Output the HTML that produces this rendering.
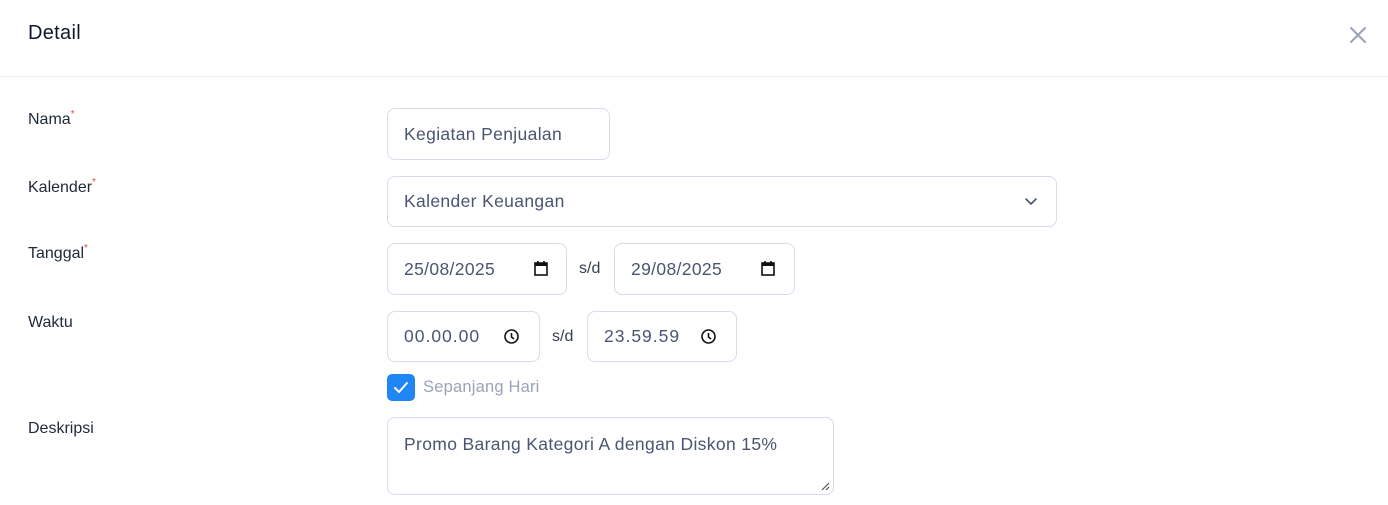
<!DOCTYPE html>
<html><head><meta charset="utf-8"><style>
*{box-sizing:border-box;margin:0;padding:0}
body{width:1388px;height:505px;background:#fff;font-family:"Liberation Sans",sans-serif;position:relative;overflow:hidden}
.abs{position:absolute}
.title{left:28px;top:22px;font-size:20px;color:#101828;letter-spacing:0.3px}
.hr{left:0;top:76px;width:1388px;height:1px;background:#e9ecf2}
.lbl{left:28px;font-size:16px;color:#1f2937}
.lbl sup{color:#ef4444;font-size:10px;position:relative;top:-2px;vertical-align:top}
.box{border:1px solid #d8dcea;border-radius:8px;background:#fff;font-size:17.5px;letter-spacing:0.35px;color:#4a5572;padding-left:16px;display:flex;align-items:center}
.sd{font-size:16px;color:#374151}
</style></head><body>
<div class="abs title">Detail</div>
<svg class="abs" style="left:1349px;top:26px" width="18" height="18" viewBox="0 0 18 18"><path d="M2 2L16 16M16 2L2 16" stroke="#9aa3b5" stroke-width="2" stroke-linecap="round"/></svg>
<div class="abs hr"></div>

<div class="abs lbl" style="top:111px">Nama<sup>*</sup></div>
<div class="abs lbl" style="top:179px">Kalender<sup>*</sup></div>
<div class="abs lbl" style="top:245px">Tanggal<sup>*</sup></div>
<div class="abs lbl" style="top:314px">Waktu</div>
<div class="abs lbl" style="top:420px">Deskripsi</div>

<div class="abs box" style="left:387px;top:108px;width:223px;height:52px">Kegiatan Penjualan</div>
<div class="abs box" style="left:387px;top:176px;width:670px;height:51px">Kalender Keuangan
<svg class="abs" style="right:18px;top:20px" width="14" height="9" viewBox="0 0 14 9"><path d="M2 2L7 7L12 2" stroke="#4a5572" stroke-width="1.6" fill="none" stroke-linecap="round" stroke-linejoin="round"/></svg></div>

<div class="abs box" style="left:387px;top:243px;width:180px;height:52px">25/08/2025
<svg class="abs" style="left:145px;top:16px" width="16" height="17" viewBox="0 0 16 17"><rect x="2" y="3" width="12" height="12" fill="none" stroke="#111" stroke-width="1.6"/><rect x="2" y="3" width="12" height="3" fill="#111"/><path d="M5 1v3M11 1v3" stroke="#111" stroke-width="1.6"/></svg></div>
<div class="abs sd" style="left:579px;top:260px">s/d</div>
<div class="abs box" style="left:614px;top:243px;width:181px;height:52px">29/08/2025
<svg class="abs" style="left:145px;top:16px" width="16" height="17" viewBox="0 0 16 17"><rect x="2" y="3" width="12" height="12" fill="none" stroke="#111" stroke-width="1.6"/><rect x="2" y="3" width="12" height="3" fill="#111"/><path d="M5 1v3M11 1v3" stroke="#111" stroke-width="1.6"/></svg></div>

<div class="abs box" style="left:387px;top:311px;width:153px;height:51px;letter-spacing:1px">00.00.00
<svg class="abs" style="left:115px;top:16px" width="17" height="17" viewBox="0 0 17 17"><circle cx="8.5" cy="8.5" r="6.5" fill="none" stroke="#111" stroke-width="1.6"/><path d="M8.5 5v4l2.5 2" stroke="#111" stroke-width="1.6" fill="none"/></svg></div>
<div class="abs sd" style="left:552px;top:328px">s/d</div>
<div class="abs box" style="left:587px;top:311px;width:150px;height:51px;letter-spacing:1px">23.59.59
<svg class="abs" style="left:112px;top:16px" width="17" height="17" viewBox="0 0 17 17"><circle cx="8.5" cy="8.5" r="6.5" fill="none" stroke="#111" stroke-width="1.6"/><path d="M8.5 5v4l2.5 2" stroke="#111" stroke-width="1.6" fill="none"/></svg></div>

<div class="abs" style="left:387px;top:374px;width:28px;height:27px;background:#2186f5;border-radius:5px">
<svg width="28" height="27" viewBox="0 0 28 27"><path d="M8 14l4 4l8-9" stroke="#fff" stroke-width="2" fill="none" stroke-linecap="round" stroke-linejoin="round"/></svg></div>
<div class="abs" style="left:423px;top:378px;font-size:16.5px;letter-spacing:0.2px;color:#9aa3ba">Sepanjang Hari</div>

<div class="abs box" style="left:387px;top:417px;width:447px;height:78px;align-items:flex-start;padding-top:16px">Promo Barang Kategori A dengan Diskon 15%
<svg class="abs" style="right:3px;bottom:3px" width="10" height="10" viewBox="0 0 10 10"><path d="M9 2L2 9M9 6L6 9" stroke="#555" stroke-width="1.2"/></svg></div>
</body></html>
